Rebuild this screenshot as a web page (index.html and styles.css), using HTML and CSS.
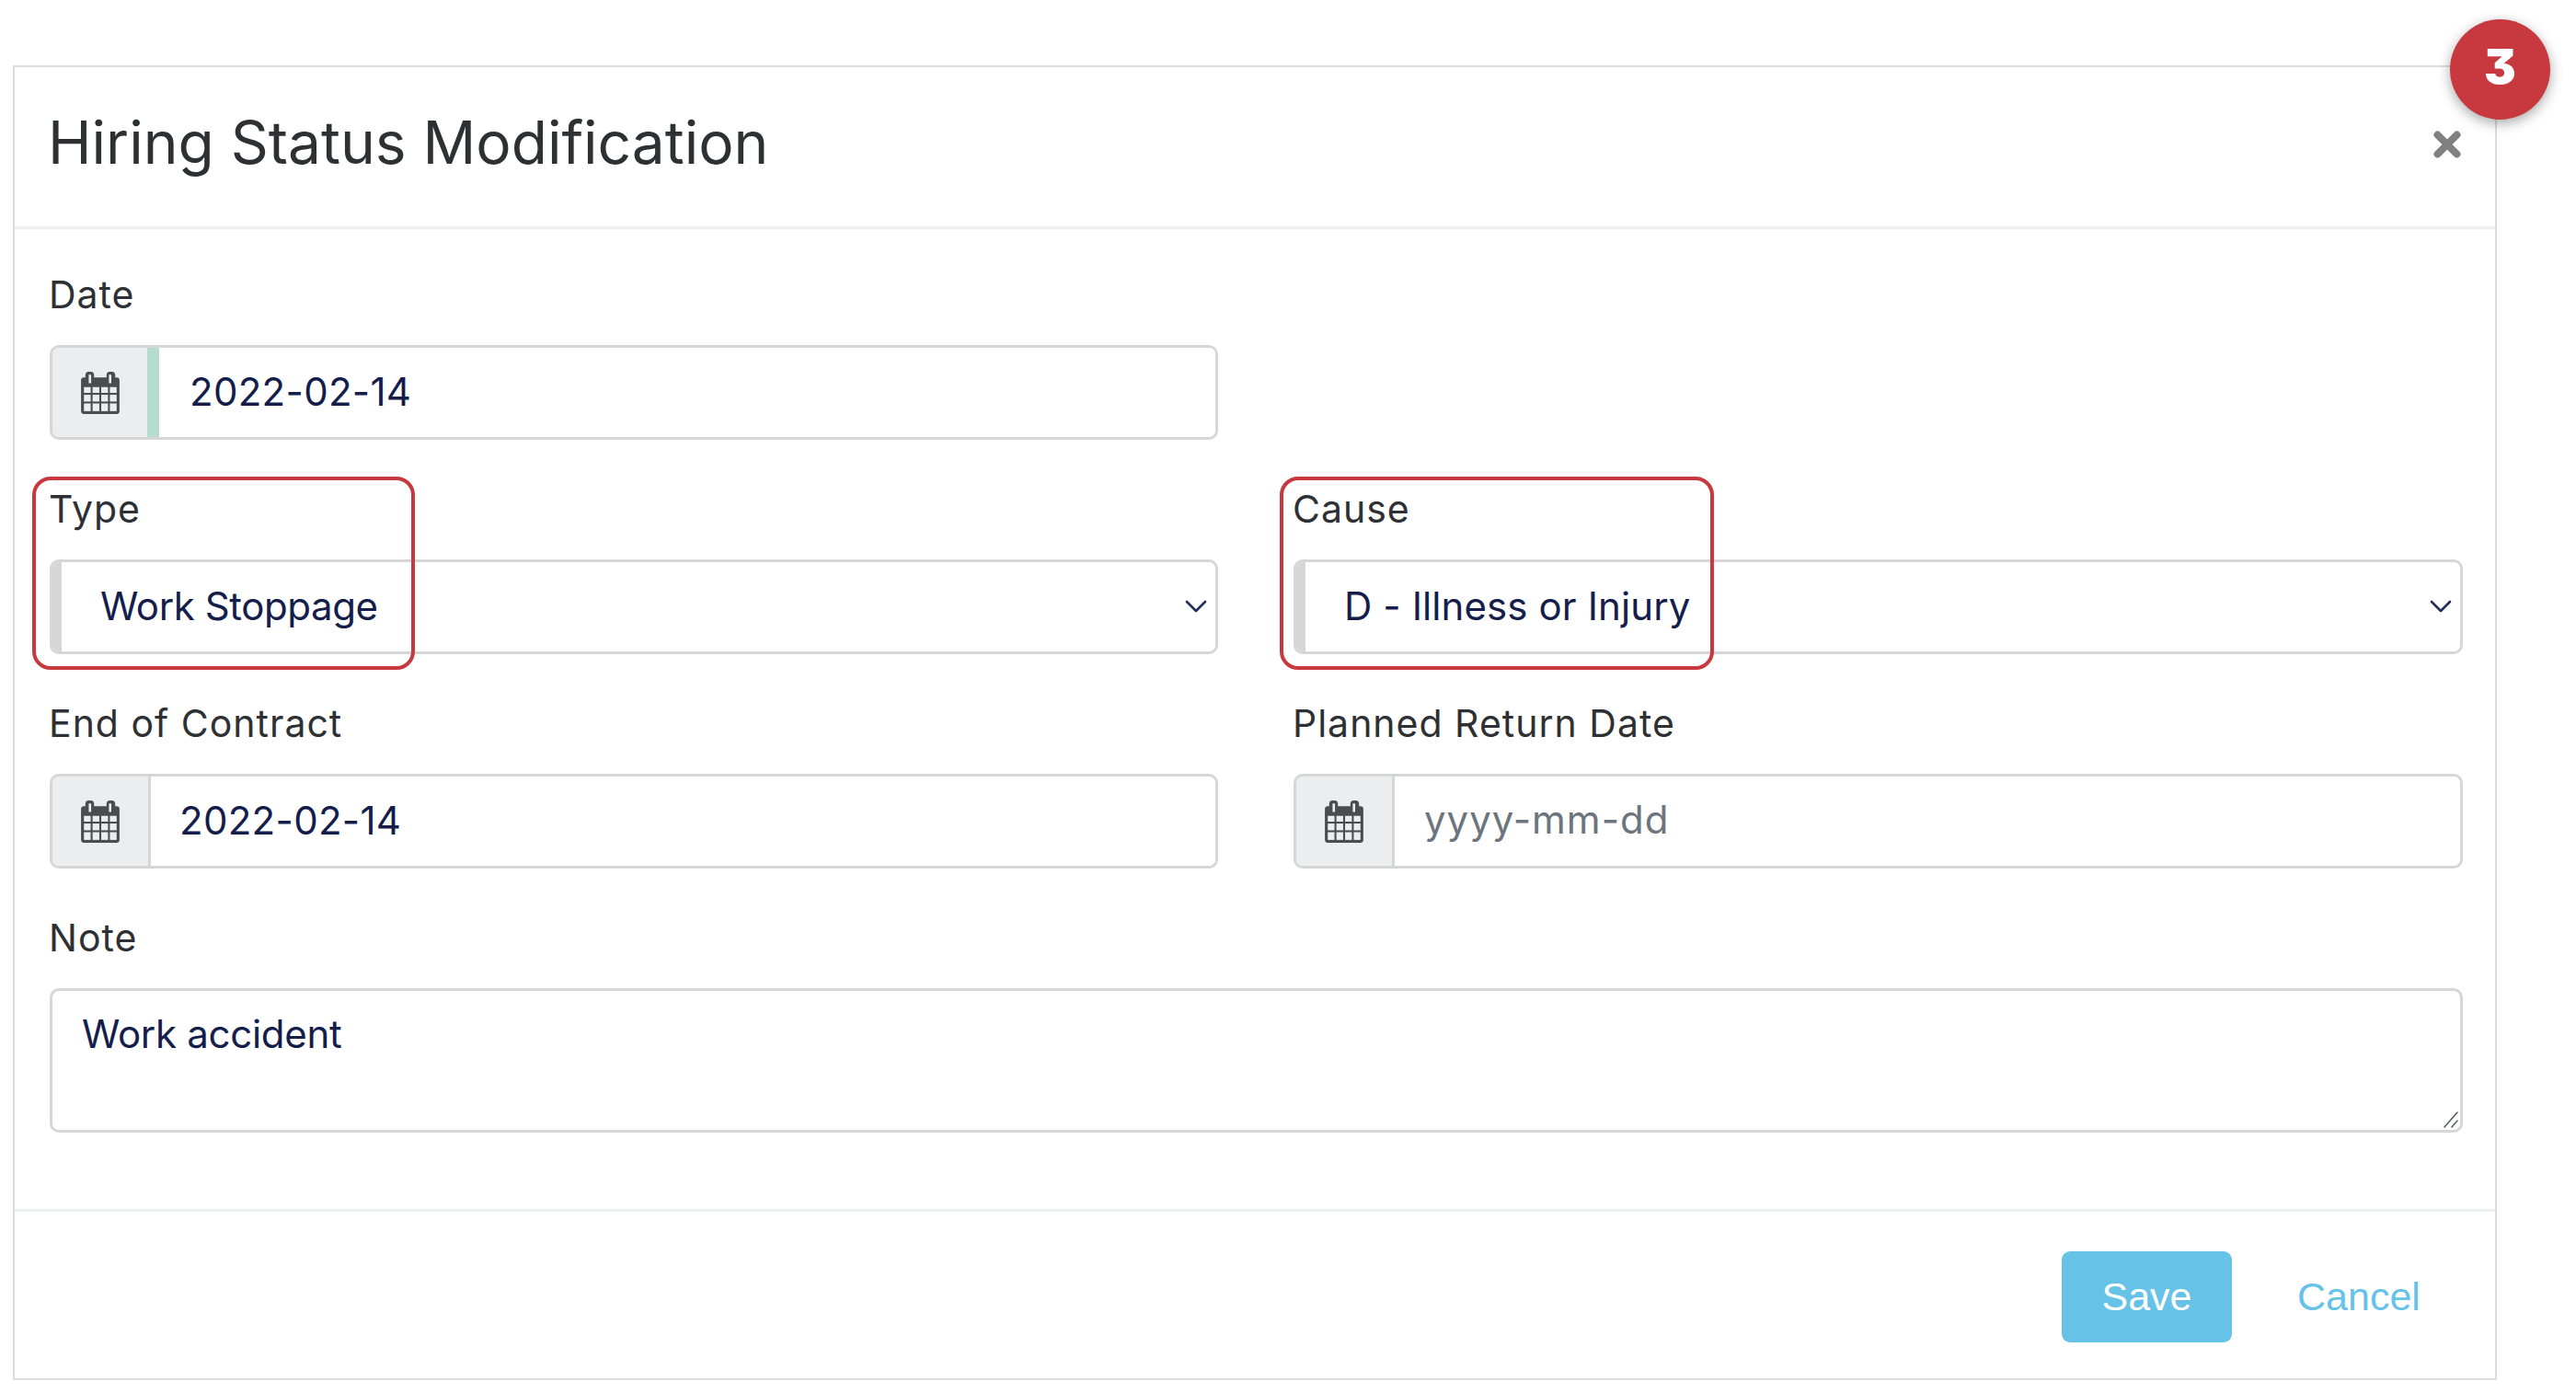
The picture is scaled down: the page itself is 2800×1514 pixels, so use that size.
FILE: index.html
```html
<!DOCTYPE html>
<html lang="en">
<head>
<meta charset="utf-8">
<title>Hiring Status Modification</title>
<link rel="stylesheet" href="styles.css">
</head>
<body>
<svg class="defs" width="0" height="0" aria-hidden="true">
  <symbol id="cal" viewBox="0 0 40 44">
    <path fill="#4a4d50" fill-rule="evenodd" d="M8 0h2a3.500 3.500 0 0 1 3.500 3.500V6h13V3.500A3.500 3.500 0 0 1 30 0h2a3.500 3.500 0 0 1 3.500 3.500V6H37a3 3 0 0 1 3 3v32a3 3 0 0 1-3 3H3a3 3 0 0 1-3-3V9a3 3 0 0 1 3-3h1.500V3.500A3.500 3.500 0 0 1 8 0zM8 3v9h2.500V3zM29 3v9h2.500V3z"/>
    <g fill="#ecedef">
      <rect x="3" y="16" width="7" height="6"/><rect x="12" y="16" width="7" height="6"/><rect x="21" y="16" width="7" height="6"/><rect x="30" y="16" width="7" height="6"/>
      <rect x="3" y="24" width="7" height="7"/><rect x="12" y="24" width="7" height="7"/><rect x="21" y="24" width="7" height="7"/><rect x="30" y="24" width="7" height="7"/>
      <rect x="3" y="33" width="7" height="8"/><rect x="12" y="33" width="7" height="8"/><rect x="21" y="33" width="7" height="8"/><rect x="30" y="33" width="7" height="8"/>
    </g>
  </symbol>
  <symbol id="chev" viewBox="0 0 24 14">
    <path d="M2 2l10 10L22 2" fill="none" stroke="#222d5c" stroke-width="2.600" stroke-linecap="round" stroke-linejoin="round"/>
  </symbol>
</svg>

<main class="modal">
  <span class="badge">3</span>
  <header class="modal-header">
    <h1 class="modal-title">Hiring Status Modification</h1>
    <button class="close" type="button" aria-label="Close">
      <svg viewBox="0 0 30 30" width="30" height="30"><path d="M4.500 4.500l21 21M25.500 4.500l-21 21" stroke="#808080" stroke-width="8" stroke-linecap="round"/></svg>
    </button>
  </header>

  <form class="modal-body">
    <div class="field">
      <label class="label">Date</label>
      <div class="group">
        <span class="addon"><svg class="cal"><use href="#cal"/></svg></span>
        <span class="strip strip-green"></span>
        <input class="control control-tight" type="text" value="2022-02-14">
      </div>
    </div>
    <div class="field"></div>

    <div class="field">
      <span class="callout callout-type"></span>
      <label class="label">Type</label>
      <div class="group">
        <span class="strip strip-gray"></span>
        <select class="control select select-type"><option>Work Stoppage</option></select>
        <svg class="chev"><use href="#chev"/></svg>
      </div>
    </div>
    <div class="field">
      <span class="callout callout-cause"></span>
      <label class="label">Cause</label>
      <div class="group">
        <span class="strip strip-gray"></span>
        <select class="control select"><option>D - Illness or Injury</option></select>
        <svg class="chev"><use href="#chev"/></svg>
      </div>
    </div>

    <div class="field">
      <label class="label">End of Contract</label>
      <div class="group">
        <span class="addon addon-line"><svg class="cal"><use href="#cal"/></svg></span>
        <input class="control control-date" type="text" value="2022-02-14">
      </div>
    </div>
    <div class="field">
      <label class="label">Planned Return Date</label>
      <div class="group">
        <span class="addon addon-line"><svg class="cal"><use href="#cal"/></svg></span>
        <input class="control control-placeholder" type="text" placeholder="yyyy-mm-dd">
      </div>
    </div>

    <div class="field field-wide">
      <label class="label">Note</label>
      <textarea class="note">Work accident</textarea>
      <svg class="grip" viewBox="0 0 16 18" width="16" height="18" aria-hidden="true"><path d="M1 17L15 1M9 17l6-7" fill="none" stroke="#55585c" stroke-width="1.500" stroke-linecap="round"/></svg>
    </div>
  </form>

  <footer class="modal-footer">
    <button class="save" type="button">Save</button>
    <a class="cancel" href="#">Cancel</a>
  </footer>
</main>
</body>
</html>
```

FILE: styles.css
```css
* { box-sizing: border-box; }
html, body { margin: 0; background: #fff; }
body { font-family: Inter, "Liberation Sans", sans-serif; color: #2e3033; }
.defs { position: absolute; }

.modal {
  position: relative;
  width: 2700px;
  height: 1429px;
  margin: 71px 0 0 14px;
  border: 2px solid #dcdcdc;
  display: flex;
  flex-direction: column;
}

.badge {
  position: absolute;
  left: 2647px;
  top: -52px;
  width: 109px;
  height: 109px;
  border-radius: 50%;
  background: #c8393f;
  color: #fff;
  font: 900 52px/104px Inter, sans-serif;
  font-feature-settings: "cv09";
  text-align: center;
  box-shadow: 0 4px 14px rgba(0, 0, 0, .35);
  z-index: 2;
}

.modal-header {
  height: 176px;
  flex: none;
  border-bottom: 3px solid #eff0f0;
  padding: 0 38px;
  display: flex;
  align-items: center;
  justify-content: space-between;
}
.modal-title { margin: 0 0 0 -2px; font-size: 64px; font-weight: 400; line-height: 1.2; color: #2e3033; padding-bottom: 8px; }
.close { border: 0; background: none; padding: 0; display: flex; position: relative; left: 1px; top: -3px; }

.modal-body {
  flex: none;
  height: 1068px;
  border-bottom: 3px solid #eff0f0;
  padding: 39px 38px 0;
  display: grid;
  grid-template-columns: 1270px 1271px;
  column-gap: 82px;
  row-gap: 43px;
  align-content: start;
}
.field { position: relative; min-height: 190px; }
.field-wide { grid-column: 1 / -1; }

.label { display: block; height: 63px; margin: 0 0 24px -1px; padding-top: 1px; font-size: 41px; letter-spacing: 1px; line-height: 63px; color: #2e3033; }

.group {
  position: relative;
  display: flex;
  height: 103px;
  border: 3px solid #d6d6d6;
  border-radius: 10px;
  overflow: hidden;
}
.addon {
  flex: none;
  width: 103px;
  background: #ecedef;
  display: flex;
  align-items: center;
  justify-content: center;
}
.addon-line { width: 107px; border-right: 3px solid #d6d6d6; }
.cal { width: 42px; height: 46px; }
.strip { flex: none; width: 13px; margin: -3px 0; }
.strip-green { background: #b5dccd; }
.strip-gray { background: #d6d6d6; margin-left: -3px; }

.control {
  flex: 1;
  min-width: 0;
  border: 0;
  outline: 0;
  background: #fff;
  padding: 0 0 3px 31px;
  font: 400 42px Inter, sans-serif;
  color: #151d4b;
}
.control-tight { padding-left: 33px; letter-spacing: .3px; }
.control-date { letter-spacing: .3px; }
.control-placeholder { padding: 0 0 5px 32px; }
.control::placeholder { color: #6c757d; opacity: 1; letter-spacing: 1px; }
.select { appearance: none; -webkit-appearance: none; padding-left: 42px; letter-spacing: .1px; }
.select-type { letter-spacing: -.4px; }
.chev { position: absolute; right: 9px; top: 41px; width: 24px; height: 14px; pointer-events: none; }

.callout { position: absolute; top: -3px; border: 4px solid #c8393f; border-radius: 20px; height: 210px; pointer-events: none; z-index: 1; }
.callout-type { left: -19px; width: 416px; }
.callout-cause { left: -15px; width: 472px; }

.note {
  display: block;
  width: 100%;
  height: 157px;
  border: 3px solid #d6d6d6;
  border-radius: 10px;
  padding: 15px 32px;
  font: 400 42px/1.5 Inter, sans-serif;
  letter-spacing: -.3px;
  color: #151d4b;
  outline: 0;
  resize: none;
}
.grip { position: absolute; right: 5px; bottom: 5px; pointer-events: none; }

.modal-footer {
  flex: 1;
  display: flex;
  align-items: center;
  padding: 4px 0 0 2225px;
  gap: 71px;
}
.save {
  width: 185px;
  height: 99px;
  border: 0;
  border-radius: 9px;
  background: #67c2e8;
  color: #fff;
  font: 400 43px "Liberation Sans", Arial, sans-serif;
}
.cancel { font: 400 43px "Liberation Sans", Arial, sans-serif; color: #67c2e8; text-decoration: none; }
```
